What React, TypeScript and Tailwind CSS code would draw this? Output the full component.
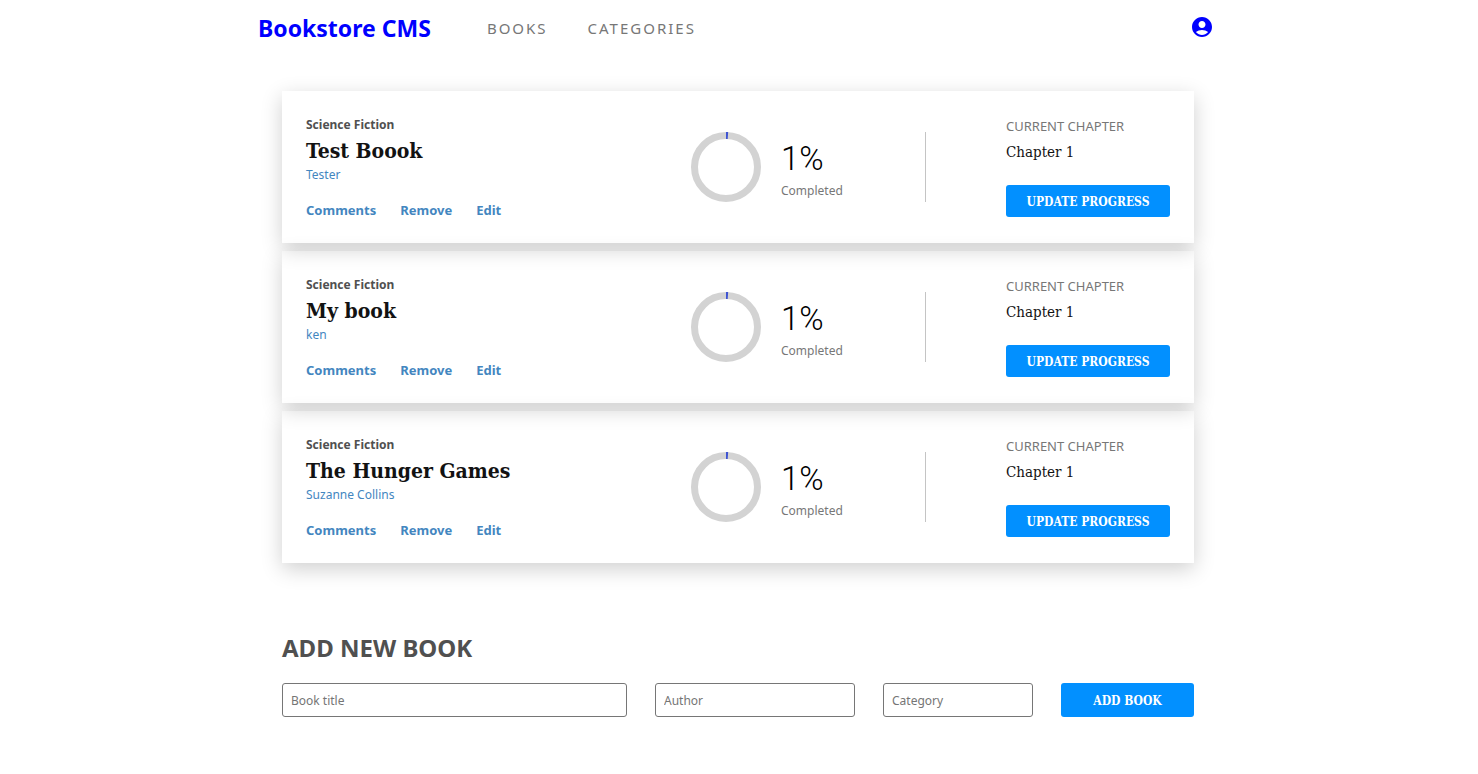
import { MdAccountCircle } from 'react-icons/md';

const slab = "font-['Roboto_Slab','DejaVu_Serif_Condensed','DejaVu_Serif',serif]";

type Book = { title: string; author: string; category: string; progress: number; chapter: string };

const books: Book[] = [
  { title: 'Test Boook', author: 'Tester', category: 'Science Fiction', progress: 1, chapter: 'Chapter 1' },
  { title: 'My book', author: 'ken', category: 'Science Fiction', progress: 1, chapter: 'Chapter 1' },
  { title: 'The Hunger Games', author: 'Suzanne Collins', category: 'Science Fiction', progress: 1, chapter: 'Chapter 1' },
];

function Ring({ value }: { value: number }) {
  return (
    <svg viewBox="0 0 70 70" className="size-[70px]" fill="none" strokeWidth="7" aria-hidden="true">
      <circle cx="35" cy="35" r="31.5" stroke="#d3d3d3" />
      <circle
        cx="35"
        cy="35"
        r="31.5"
        stroke="#3e54d3"
        pathLength="100"
        strokeDasharray={`${value} 100`}
        transform="rotate(-90 35 35)"
      />
    </svg>
  );
}

function BookCard({ book }: { book: Book }) {
  return (
    <li className="flex items-start justify-between px-6 py-6 shadow-[0_6px_20px_rgba(0,0,0,0.19)]">
      <div>
        <p className="text-xs leading-5 font-bold text-[#505050]">{book.category}</p>
        <h2 className={`${slab} text-[21px] leading-8 font-bold text-[#121212]`}>{book.title}</h2>
        <p className="text-xs leading-4 text-[#4386bf]">{book.author}</p>
        <div className="mt-[18px] flex gap-6 text-[13px] leading-[18px] font-bold text-[#4386bf]">
          <button type="button">Comments</button>
          <button type="button">Remove</button>
          <button type="button">Edit</button>
        </div>
      </div>
      <div className="flex gap-20">
        <div className="mt-[17px] flex gap-5">
          <Ring value={book.progress} />
          <div className="w-16">
            <p className="mt-2 font-['Roboto',sans-serif] text-[33px] leading-[38px] font-light text-black">{book.progress}%</p>
            <p className="mt-1 text-xs leading-[18px] whitespace-nowrap text-[#777777]">Completed</p>
          </div>
        </div>
        <div className="mt-[17px] h-[70px] w-px bg-[#c4c4c4]" />
        <div className="w-[164px]">
          <p className="mt-0.5 text-[13px] leading-[18px] text-[#777777]">CURRENT CHAPTER</p>
          <p className={`${slab} mt-[5px] text-[15px] leading-6 text-[#121212]`}>{book.chapter}</p>
          <button type="button" className={`${slab} mt-[21px] h-8 w-full rounded-[3px] bg-[#0290ff] pt-0.5 text-xs font-bold text-white`}>
            UPDATE PROGRESS
          </button>
        </div>
      </div>
    </li>
  );
}

const field = 'h-[34px] w-full min-w-0 rounded-[3px] border border-[#767676] bg-white px-2 text-xs placeholder:text-[#757575]';

export default function App() {
  return (
    <div className="mx-auto max-w-[962px] font-['Segoe_UI','Noto_Sans',sans-serif]">
      <header className="flex h-14 items-center">
        <h1 className="text-[23px] font-bold text-[#0000ff]">Bookstore CMS</h1>
        <nav className="ml-14 flex gap-10 text-[15px] tracking-[2px] text-[#777777]">
          <a href="#books">BOOKS</a>
          <a href="#categories">CATEGORIES</a>
        </nav>
        <button type="button" aria-label="Account" className="mr-1.5 ml-auto text-[#0000ff]">
          <MdAccountCircle className="mb-0.5 size-6" />
        </button>
      </header>
      <main className="pt-[35px] pr-[26px] pb-10 pl-6">
        <ul className="flex flex-col gap-2">
          {books.map((book) => (
            <BookCard key={book.title} book={book} />
          ))}
        </ul>
        <section className="mt-[67px]">
          <h2 className="text-2xl leading-9 font-bold text-[#505050]">ADD NEW BOOK</h2>
          <form className="mt-[17px] grid grid-cols-[345fr_200fr_150fr_133fr] gap-7" onSubmit={(e) => e.preventDefault()}>
            <input className={field} type="text" aria-label="Book title" placeholder="Book title" />
            <input className={field} type="text" aria-label="Author" placeholder="Author" />
            <input className={field} type="text" aria-label="Category" placeholder="Category" />
            <button type="submit" className={`${slab} h-[34px] rounded-[3px] bg-[#0290ff] pt-0.5 text-xs font-bold text-white`}>
              ADD BOOK
            </button>
          </form>
        </section>
      </main>
    </div>
  );
}
